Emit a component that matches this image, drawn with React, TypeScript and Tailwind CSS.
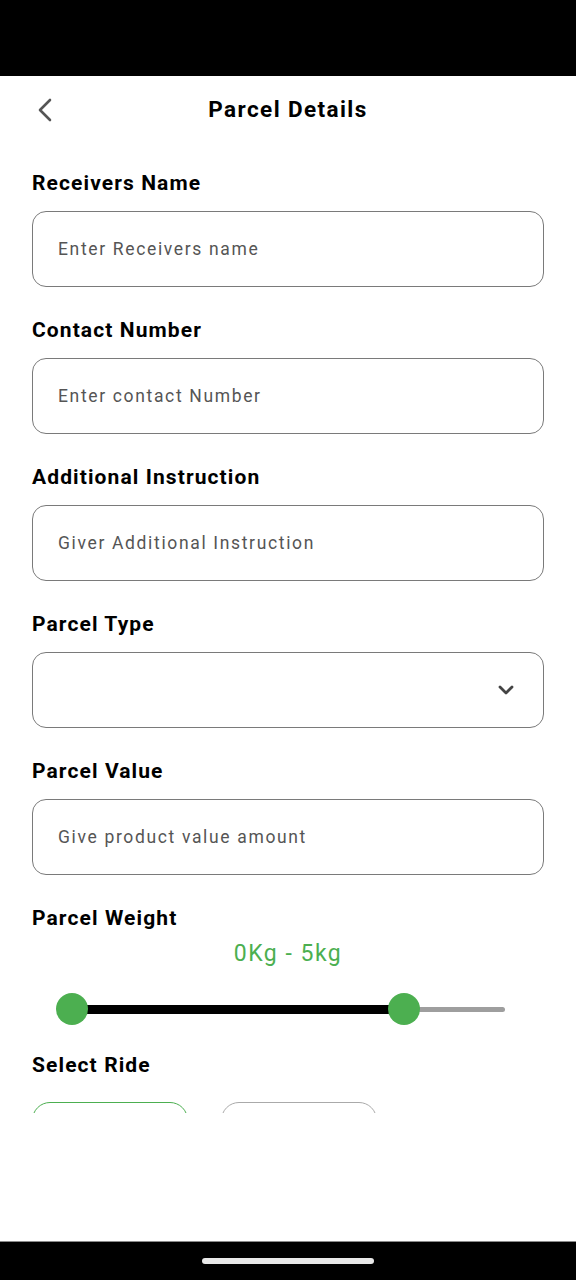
import React from "react";

const Label = ({ children }: { children: React.ReactNode }) => (
  <div className="h-[28px] leading-[28px] text-[21px] font-bold tracking-[1.1px] text-black">{children}</div>
);

const Field = ({ placeholder }: { placeholder: string }) => (
  <div className="mt-[14px] h-[76px] rounded-[14px] border-[1.5px] border-[#7a7a7a] flex items-center px-[25px]">
    <span className="text-[17.5px] text-[#555555] tracking-[1.65px]">{placeholder}</span>
  </div>
);

export default function App() {
  return (
    <div className="w-[576px] h-[1280px] bg-white flex flex-col" style={{ fontFamily: "Roboto, 'Noto Sans', sans-serif" }}>
      <div className="h-[76px] bg-black shrink-0" />
      <div className="h-[1165px] shrink-0 flex flex-col">
        <div className="h-[1037px] overflow-hidden">
          <div className="relative h-[68px] flex items-center justify-center">
            <svg className="absolute left-[36px] top-[22px]" width="18" height="24" viewBox="0 0 18 24">
              <path d="M14 2 L4 12 L14 22" fill="none" stroke="#555" strokeWidth="2.6" strokeLinecap="round" strokeLinejoin="round" />
            </svg>
            <span className="text-[22.5px] font-bold tracking-[1.4px] text-black">Parcel Details</span>
          </div>
          <div className="px-[32px] pt-[25px]">
            <Label>Receivers Name</Label>
            <Field placeholder="Enter Receivers name" />
            <div className="h-[29px]" />
            <Label>Contact Number</Label>
            <Field placeholder="Enter contact Number" />
            <div className="h-[29px]" />
            <Label>Additional Instruction</Label>
            <Field placeholder="Giver Additional Instruction" />
            <div className="h-[29px]" />
            <Label>Parcel Type</Label>
            <div className="mt-[14px] h-[76px] rounded-[14px] border-[1.5px] border-[#7a7a7a] flex items-center justify-end pr-[29px]">
              <svg width="16" height="10" viewBox="0 0 16 10">
                <path d="M2 2 L8 8 L14 2" fill="none" stroke="#444" strokeWidth="2.8" strokeLinecap="round" strokeLinejoin="round" />
              </svg>
            </div>
            <div className="h-[29px]" />
            <Label>Parcel Value</Label>
            <Field placeholder="Give product value amount" />
            <div className="h-[29px]" />
            <Label>Parcel Weight</Label>
            <div className="mt-[8px] h-[28px] leading-[28px] text-center text-[23px] tracking-[1.5px] text-[#4caf50]">0Kg - 5kg</div>
            <div className="relative h-[56px] mt-[13px] ml-[24px] w-[449px]">
              <div className="absolute left-[16px] right-0 top-[26px] h-[5px] rounded-full bg-[#9e9e9e]" />
              <div className="absolute left-[16px] w-[332px] top-[24px] h-[9px] bg-black" />
              <div className="absolute left-0 top-[12px] w-[32px] h-[32px] rounded-full bg-[#4caf50]" />
              <div className="absolute left-[332px] top-[12px] w-[32px] h-[32px] rounded-full bg-[#4caf50]" />
            </div>
            <div className="mt-[14px]">
              <Label>Select Ride</Label>
            </div>
            <div className="mt-[23px] flex gap-[33px]">
              <div className="w-[156px] h-[60px] rounded-[18px] border-[1.5px] border-[#4caf50]" />
              <div className="w-[156px] h-[60px] rounded-[18px] border-[1.5px] border-[#aaaaaa]" />
            </div>
          </div>
        </div>
      </div>
      <div className="h-[39px] shrink-0 bg-black border-t border-[#8a8a8a] flex justify-center">
        <div className="mt-[16px] w-[172px] h-[6px] rounded-full bg-[#e8e8e8]" />
      </div>
    </div>
  );
}
